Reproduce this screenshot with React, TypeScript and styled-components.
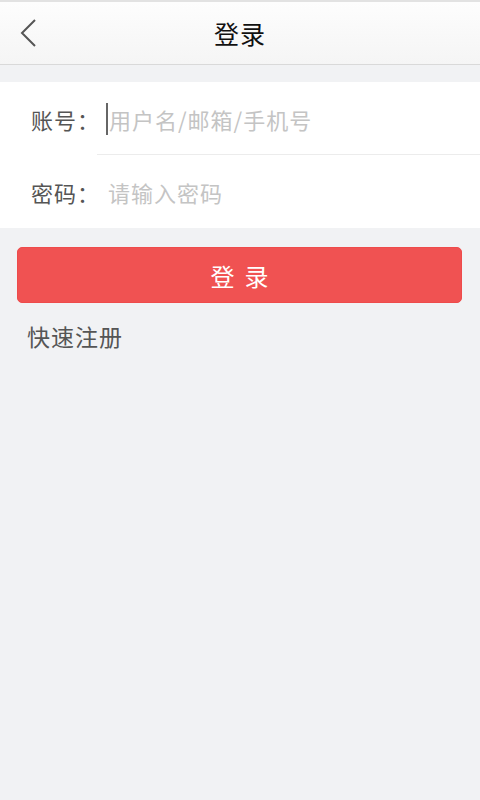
import React from 'react'
import styled, { createGlobalStyle } from 'styled-components'

const GlobalStyle = createGlobalStyle`
  html, body {
    margin: 0;
    padding: 0;
    background: #f1f2f4;
  }
  body {
    font-family: "Noto Sans CJK SC", "Noto Sans", sans-serif;
  }
`

const Page = styled.div`
  min-height: 800px;
  background: #f1f2f4;
  border-top: 2px solid #e2e2e2;
  box-sizing: border-box;
`

const Header = styled.header`
  position: relative;
  height: 62px;
  display: flex;
  align-items: center;
  justify-content: center;
  background: linear-gradient(#fdfdfd, #f5f5f5);
  border-bottom: 1px solid #d9d9d9;
`

const BackButton = styled.button`
  position: absolute;
  left: 13px;
  top: 14px;
  width: 30px;
  height: 34px;
  padding: 0;
  border: 0;
  background: none;
  display: flex;
  align-items: center;
  justify-content: center;
`

const Title = styled.h1`
  margin: 0;
  font-size: 25px;
  font-weight: 400;
  color: #111;
  letter-spacing: 1px;
`

const Form = styled.div`
  margin-top: 17px;
  background: #fff;
`

const Row = styled.label<{ divided?: boolean }>`
  display: flex;
  align-items: center;
  height: 73px;
  padding-left: 31px;
  position: relative;
  ${({ divided }) =>
    divided &&
    `
    &::after {
      content: '';
      position: absolute;
      left: 97px;
      right: 0;
      bottom: 0;
      border-bottom: 1px solid #ececec;
    }
  `}
`

const Label = styled.span`
  width: 77px;
  font-size: 22px;
  color: #555;
  letter-spacing: 1px;
`

const Field = styled.input<{ focused?: boolean }>`
  flex: 1;
  border: 0;
  outline: none;
  background: transparent;
  font-family: inherit;
  font-size: 22px;
  color: #333;
  padding: 0;
  ${({ focused }) => focused && `border-left: 2px solid #666; padding-left: 1px; margin-left: -2px;`}

  &::placeholder {
    color: #c4c4c4;
    letter-spacing: 1px;
  }
`

const Actions = styled.div`
  padding: 19px 18px 0 17px;
`

const SubmitButton = styled.button`
  width: 100%;
  height: 56px;
  border: 1px solid #ee4b4b;
  border-radius: 5px;
  background: #f05252;
  color: #fff;
  font-family: inherit;
  font-size: 24px;
  letter-spacing: 10px;
  text-indent: 10px;
`

const RegisterLink = styled.a`
  display: inline-block;
  margin: 16px 0 0 10px;
  font-size: 23px;
  color: #555;
  letter-spacing: 1px;
  text-decoration: none;
`

export default function App() {
  return (
    <Page>
      <GlobalStyle />
      <Header>
        <BackButton aria-label="返回">
          <svg width="20" height="30" viewBox="0 0 20 30">
            <path d="M17 2 L4 15 L17 28" fill="none" stroke="#555" strokeWidth="2" />
          </svg>
        </BackButton>
        <Title>登录</Title>
      </Header>
      <Form>
        <Row divided>
          <Label>账号：</Label>
          <Field focused placeholder="用户名/邮箱/手机号" />
        </Row>
        <Row>
          <Label>密码：</Label>
          <Field type="password" placeholder="请输入密码" />
        </Row>
      </Form>
      <Actions>
        <SubmitButton>登录</SubmitButton>
        <RegisterLink href="#">快速注册</RegisterLink>
      </Actions>
    </Page>
  )
}
